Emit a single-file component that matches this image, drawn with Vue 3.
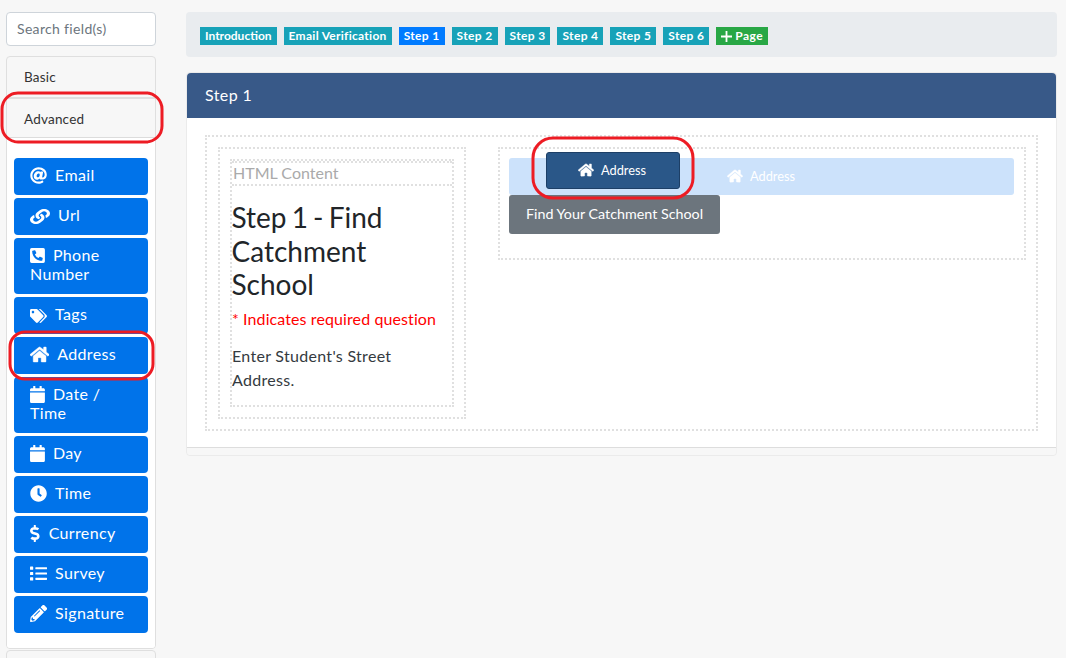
<script setup>
import { ref } from 'vue'

const homeIcon = { w: 576, home: true, d: 'M280.37 148.26L96 300.11V464a16 16 0 0 0 16 16l112.06-.29a16 16 0 0 0 15.92-16V368a16 16 0 0 1 16-16h64a16 16 0 0 1 16 16v95.64a16 16 0 0 0 16 16.05L464 480a16 16 0 0 0 16-16V300L295.67 148.26a12.19 12.19 0 0 0-15.3 0zM571.6 251.47L488 182.56V44.05a12 12 0 0 0-12-12h-56a12 12 0 0 0-12 12v72.61L318.47 43a48 48 0 0 0-61 0L4.34 251.47a12 12 0 0 0-1.6 16.9l25.5 31A12 12 0 0 0 45.15 301l235.22-193.74a12.19 12.19 0 0 1 15.3 0L530.9 301a12 12 0 0 0 16.9-1.6l25.5-31a12 12 0 0 0-1.7-16.93z' }
const calendarIcon = { w: 448, d: 'M12 192h424c6.6 0 12 5.4 12 12v260c0 26.5-21.5 48-48 48H48c-26.5 0-48-21.5-48-48V204c0-6.6 5.4-12 12-12zm436-44v-36c0-26.5-21.5-48-48-48h-48V12c0-6.6-5.4-12-12-12h-40c-6.6 0-12 5.4-12 12v52H160V12c0-6.6-5.4-12-12-12h-40c-6.6 0-12 5.4-12 12v52H48C21.5 64 0 85.5 0 112v36c0 6.6 5.4 12 12 12h424c6.6 0 12-5.4 12-12z' }

// iw / ih: icons that are drawn squatter than their box
const fields = ref([
  { label: 'Email', w: 512, d: 'M256 8C118.941 8 8 118.919 8 256c0 137.059 110.919 248 248 248 48.154 0 95.342-14.14 135.408-40.223 12.005-7.815 14.625-24.288 5.552-35.372l-10.177-12.433c-7.671-9.371-21.179-11.667-31.373-5.129C325.92 429.757 291.314 440 256 440c-101.458 0-184-82.542-184-184S154.542 72 256 72c100.139 0 184 57.619 184 160 0 38.786-21.093 79.742-58.17 83.693-17.349-.454-16.91-12.857-13.476-30.024l23.433-121.11C394.653 149.75 383.308 136 368.225 136h-44.981a13.518 13.518 0 0 0-13.432 11.993l-.01.092c-14.697-17.901-40.448-21.775-59.971-21.775-74.58 0-137.831 62.234-137.831 151.46 0 65.303 36.785 105.87 96 105.87 26.984 0 57.369-15.637 74.991-38.333 9.522 34.104 40.613 34.103 70.71 34.103C462.609 379.41 504 307.798 504 232 504 95.653 394.023 8 256 8zm-21.68 304.43c-22.249 0-36.07-15.623-36.07-40.771 0-44.993 30.779-72.729 58.63-72.729 22.292 0 35.601 15.241 35.601 40.77 0 45.061-33.875 72.73-58.161 72.73z' },
  { label: 'Url', w: 512, iw: 20, ih: 15, d: 'M326.612 185.391c59.747 59.809 58.927 155.698.36 214.59-.11.12-.24.25-.36.37l-67.2 67.2c-59.27 59.27-155.699 59.262-214.96 0-59.27-59.26-59.27-155.7 0-214.96l37.106-37.106c9.84-9.84 26.786-3.3 27.294 10.606.648 17.722 3.826 35.527 9.69 52.721 1.986 5.822.567 12.262-3.783 16.612l-13.087 13.087c-28.026 28.026-28.905 73.66-1.155 101.96 28.024 28.579 74.086 28.749 102.325.51l67.2-67.19c28.191-28.191 28.073-73.757 0-101.83-3.701-3.694-7.429-6.564-10.341-8.569a16.037 16.037 0 0 1-6.947-12.606c-.396-10.567 3.348-21.456 11.698-29.806l21.054-21.055c5.521-5.521 14.182-6.199 20.584-1.731a152.482 152.482 0 0 1 20.522 17.197zM467.547 44.449c-59.261-59.262-155.69-59.27-214.96 0l-67.2 67.2c-.12.12-.25.25-.36.37-58.566 58.892-59.387 154.781.36 214.59a152.454 152.454 0 0 0 20.521 17.196c6.402 4.468 15.064 3.789 20.584-1.731l21.054-21.055c8.35-8.35 12.094-19.239 11.698-29.806a16.037 16.037 0 0 0-6.947-12.606c-2.912-2.005-6.64-4.875-10.341-8.569-28.073-28.073-28.191-73.639 0-101.83l67.2-67.19c28.239-28.239 74.3-28.069 102.325.51 27.75 28.3 26.872 73.934-1.155 101.96l-13.087 13.087c-4.35 4.35-5.769 10.79-3.783 16.612 5.864 17.194 9.042 34.999 9.69 52.721.509 13.906 17.454 20.446 27.294 10.606l37.106-37.106c59.271-59.259 59.271-155.699.001-214.959z' },
  { label: 'Phone Number', w: 448, d: 'M400 32H48A48 48 0 0 0 0 80v352a48 48 0 0 0 48 48h352a48 48 0 0 0 48-48V80a48 48 0 0 0-48-48zm-16.39 307.37l-15 65A15 15 0 0 1 354 416C194 416 64 286.29 64 126a15.7 15.7 0 0 1 11.63-14.61l65-15A18.23 18.23 0 0 1 144 96a16.27 16.27 0 0 1 13.79 9.09l30 70A17.9 17.9 0 0 1 189 181a17 17 0 0 1-5.5 11.61l-37.89 31a231.91 231.91 0 0 0 110.78 110.78l31-37.89A17 17 0 0 1 299 291a17.85 17.85 0 0 1 5.91 1.21l70 30A16.25 16.25 0 0 1 384 336a17.41 17.41 0 0 1-.39 3.37z' },
  { label: 'Tags', w: 640, iw: 17, ih: 14, d: 'M497.941 225.941L286.059 14.059A48 48 0 0 0 252.118 0H48C21.49 0 0 21.49 0 48v204.118a48 48 0 0 0 14.059 33.941l211.882 211.882c18.744 18.745 49.136 18.746 67.882 0l204.118-204.118c18.745-18.745 18.745-49.137 0-67.882zM112 160c-26.51 0-48-21.49-48-48s21.49-48 48-48 48 21.49 48 48-21.49 48-48 48zm513.941 133.823L421.823 497.941c-18.745 18.745-49.137 18.745-67.882 0l-.36-.36L527.64 323.522c16.999-16.999 26.36-39.6 26.36-63.64s-9.362-46.641-26.36-63.64L331.397 0h48.721a48 48 0 0 1 33.941 14.059l211.882 211.882c18.745 18.745 18.745 49.137 0 67.882z' },
  { label: 'Address', ...homeIcon },
  { label: 'Date / Time', ...calendarIcon },
  { label: 'Day', ...calendarIcon },
  { label: 'Time', w: 512, d: 'M256,8C119,8,8,119,8,256S119,504,256,504,504,393,504,256,393,8,256,8Zm92.49,313h0l-20,25a16,16,0,0,1-22.49,2.5h0l-67-49.72a40,40,0,0,1-15-31.23V112a16,16,0,0,1,16-16h32a16,16,0,0,1,16,16V256l58,42.5A16,16,0,0,1,348.49,321Z' },
  { label: 'Currency', w: 320, d: 'M209.2 233.4l-108-31.6C88.7 198.2 80 186.5 80 173.5c0-16.3 13.2-29.5 29.5-29.5h66.3c12.2 0 24.2 3.7 34.2 10.5 6.1 4.1 14.3 3.1 19.5-2l34.8-34c7.1-6.9 6.1-18.4-1.8-24.5C238 74.8 207.4 64.1 176 64V16c0-8.8-7.2-16-16-16h-32c-8.8 0-16 7.2-16 16v48h-2.5C45.8 64-5.4 118.7.5 183.6c4.2 46.1 39.4 83.6 83.8 96.6l102.5 30c12.5 3.7 21.2 15.3 21.2 28.3 0 16.3-13.2 29.5-29.5 29.5h-66.3C100 368 88 364.3 78 357.5c-6.1-4.1-14.3-3.1-19.5 2l-34.8 34c-7.1 6.9-6.1 18.4 1.8 24.5 24.5 19.2 55.1 29.9 86.5 30v48c0 8.8 7.2 16 16 16h32c8.8 0 16-7.2 16-16v-48.2c46.6-.9 90.3-28.6 105.7-72.7 21.5-61.6-14.6-124.8-72.5-141.7z' },
  { label: 'Survey', w: 512, d: 'M80 368H16a16 16 0 0 0-16 16v64a16 16 0 0 0 16 16h64a16 16 0 0 0 16-16v-64a16 16 0 0 0-16-16zm0-320H16A16 16 0 0 0 0 64v64a16 16 0 0 0 16 16h64a16 16 0 0 0 16-16V64a16 16 0 0 0-16-16zm0 160H16a16 16 0 0 0-16 16v64a16 16 0 0 0 16 16h64a16 16 0 0 0 16-16v-64a16 16 0 0 0-16-16zm416 176H176a16 16 0 0 0-16 16v32a16 16 0 0 0 16 16h320a16 16 0 0 0 16-16v-32a16 16 0 0 0-16-16zm0-320H176a16 16 0 0 0-16 16v32a16 16 0 0 0 16 16h320a16 16 0 0 0 16-16V80a16 16 0 0 0-16-16zm0 160H176a16 16 0 0 0-16 16v32a16 16 0 0 0 16 16h320a16 16 0 0 0 16-16v-32a16 16 0 0 0-16-16z' },
  { label: 'Signature', w: 512, d: 'M497.9 142.1l-46.1 46.1c-4.7 4.7-12.3 4.7-17 0l-111-111c-4.7-4.7-4.7-12.3 0-17l46.1-46.1c18.7-18.7 49.1-18.7 67.9 0l60.1 60.1c18.8 18.7 18.8 49.1 0 67.9zM284.2 99.8L21.6 362.4.4 483.9c-2.9 16.4 11.4 30.6 27.8 27.8l121.5-21.3 262.6-262.6c4.7-4.7 4.7-12.3 0-17l-111-111c-4.8-4.7-12.4-4.7-17.1 0zM124.1 339.9c-5.5-5.5-5.5-14.3 0-19.8l154-154c5.5-5.5 14.3-5.5 19.8 0s5.5 14.3 0 19.8l-154 154c-5.5 5.5-14.3 5.5-19.8 0zM88 424h48v36.3l-64.5 11.3-31.1-31.1L51.7 376H88v48z' }
])

const pages = ref(['Introduction', 'Email Verification', 'Step 1', 'Step 2', 'Step 3', 'Step 4', 'Step 5', 'Step 6'])

function iconSize(f) {
  return {
    width: (f.iw || f.w / 30) + 'px',
    height: (f.ih || 17) + 'px'
  }
}
</script>

<template>
  <div class="page">
    <aside class="sidebar">
      <input class="search" type="text" placeholder="Search field(s)" />
      <div class="accordion">
        <div class="acc-head basic">Basic</div>
        <div class="acc-head advanced">Advanced</div>
        <div class="acc-body">
          <button v-for="f in fields" :key="f.label" class="field-btn">
            <svg class="ico" :class="{ home: f.home }" :viewBox="`0 0 ${f.w} 512`" :style="iconSize(f)" :preserveAspectRatio="f.iw ? 'none' : undefined"><path :d="f.d" /></svg>{{ f.label }}
          </button>
        </div>
      </div>
      <div class="accordion next"></div>
    </aside>

    <main class="main">
      <div class="toolbar">
        <span
          v-for="p in pages"
          :key="p"
          class="badge"
          :class="{ active: p === 'Step 1', step: p.startsWith('Step'), wide: p.startsWith('Email') }"
        >{{ p }}</span>
        <span class="badge add">
          <svg class="plus" viewBox="0 0 11 11"><path d="M5.5 0v11M0 5.5h11" /></svg>Page
        </span>
      </div>

      <div class="card-wrap">
        <div class="card">
          <div class="card-head">Step 1</div>
          <div class="card-body">
            <div class="row-box">
              <div class="col-box left">
                <div class="html-box">
                  <div class="html-label">HTML Content</div>
                  <div class="html-inner">
                    <h2>Step 1 - Find Catchment School</h2>
                    <p class="req">* Indicates required question</p>
                    <p class="intro">Enter Student's Street Address.</p>
                  </div>
                </div>
              </div>
              <div class="col-box right">
                <div class="ghost">
                  <svg class="ico small home" viewBox="0 0 576 512"><path :d="fields[4].d" /></svg>Address
                </div>
                <button class="gray-btn">Find Your Catchment School</button>
                <div class="dragging">
                  <svg class="ico small home" viewBox="0 0 576 512"><path :d="fields[4].d" /></svg>Address
                </div>
              </div>
            </div>
          </div>
          <div class="card-foot"></div>
        </div>
      </div>
    </main>

    <!-- red annotations drawn over the screenshot -->
    <svg class="marks" width="1066" height="658" viewBox="0 0 1066 658">
      <rect x="2" y="93" width="160" height="49" rx="16" />
      <rect x="10" y="332" width="143" height="47" rx="15" />
      <rect x="533" y="138" width="160" height="60" rx="20" />
    </svg>
  </div>
</template>

<style>
html, body {
  margin: 0;
  overflow: hidden;
  background: #f7f7f7;
}
</style>

<style scoped>
.page {
  position: relative;
  width: 1066px;
  height: 658px;
  overflow: hidden;
  display: flex;
  align-items: flex-start;
  padding: 12px 0 0 6px;
  box-sizing: border-box;
  background: #f7f7f7;
  font-family: Lato, "Open Sans", sans-serif;
  font-size: 16px;
  color: #212529;
}
.sidebar {
  width: 150px;
  flex: none;
}
.search {
  display: block;
  width: 100%;
  height: 34px;
  box-sizing: border-box;
  padding: 0 10px 2px;
  border: 1px solid #ced4da;
  border-radius: 4px;
  font: 14px Lato, sans-serif;
  letter-spacing: 0.33px;
  background: #fff;
  margin-bottom: 10px;
}
.search::placeholder {
  color: #6c757d;
  opacity: 1;
}
.accordion {
  border: 1px solid #dfdfdf;
  border-radius: 4px;
  background: #f7f7f7;
  overflow: hidden;
}
.acc-head {
  padding: 0 17px;
  font-size: 13.5px;
  letter-spacing: 0.2px;
  color: #333;
  display: flex;
  align-items: center;
}
.basic {
  height: 40px;
}
.advanced {
  height: 41px;
  padding-top: 1px;
  border-top: 2px solid #e0e0e0;
  border-bottom: 1px solid #dcdcdc;
  box-sizing: border-box;
}
.acc-body {
  background: #fff;
  padding: 20px 7px 15px;
  display: flex;
  flex-direction: column;
  gap: 3px;
}
.field-btn {
  display: block;
  width: 134px;
  box-sizing: border-box;
  padding: 7px 16px 11px;
  border: none;
  border-radius: 4px;
  background: #0073ea;
  color: #fff;
  font: 16px/19px Lato, sans-serif;
  letter-spacing: 0.35px;
  text-align: left;
}
.next {
  margin-top: 1px;
  height: 30px;
}
.ico {
  fill: currentColor;
  vertical-align: -2.5px;
  margin-right: 8px;
}
.ico.home path {
  stroke: currentColor;
  stroke-width: 14;
}
.ico.small {
  width: 16px;
  height: 14px;
  margin-right: 7px;
}
.main {
  margin-left: 30px;
  width: 871px;
  flex: none;
}
.toolbar {
  height: 45px;
  box-sizing: border-box;
  padding: 15px 14px;
  background: #e9ecef;
  border-radius: 4px;
  display: flex;
  gap: 7px;
  margin-bottom: 15px;
}
.badge {
  height: 18px;
  box-sizing: border-box;
  padding: 0 5px;
  background: #17a2b8;
  color: #fff;
  font-size: 12px;
  font-weight: 700;
  line-height: 18px;
  white-space: nowrap;
}
.badge.step {
  letter-spacing: 0.35px;
}
.badge.wide {
  letter-spacing: 0.28px;
}
.badge.active {
  background: #007bff;
}
.badge.add {
  background: #28a745;
  display: inline-flex;
  align-items: center;
  letter-spacing: 0.5px;
}
.plus {
  width: 11px;
  height: 11px;
  margin-right: 3px;
  stroke: #fff;
  stroke-width: 1.8;
  fill: none;
}
.card-wrap {
  border: 1px solid #ebebeb;
  border-radius: 4px;
}
.card {
  border-radius: 4px;
  overflow: hidden;
}
.card-head {
  height: 45px;
  box-sizing: border-box;
  padding: 0 18px;
  background: #385988;
  color: #fff;
  font-size: 16px;
  letter-spacing: 0.4px;
  line-height: 44px;
}
.card-body {
  background: #fff;
  padding: 17px 18px 16px;
  border-bottom: 1px solid #ddd;
}
.card-foot {
  height: 7px;
  background: #f7f7f7;
}
.row-box {
  border: 2px dotted #e0e0e0;
  padding: 10px 10px 10px 11px;
  display: grid;
  grid-template-columns: 248px 528px;
  column-gap: 32px;
  align-items: start;
}
.col-box {
  border: 2px dotted #e0e0e0;
  box-sizing: border-box;
}
.left {
  height: 272px;
  padding: 10px;
}
.right {
  position: relative;
  height: 113px;
  padding: 9px 10px 9px 9px;
}
.html-box {
  border: 2px dotted #e0e0e0;
  height: 248px;
  box-sizing: border-box;
}
.html-label {
  height: 25px;
  box-sizing: border-box;
  border-top: 2px dotted #e0e0e0;
  border-bottom: 2px dotted #e0e0e0;
  color: #aaa;
  padding-left: 1px;
  line-height: 19px;
}
.html-inner {
  padding: 15px 0 0;
}
h2 {
  margin: 0 0 5px -0.5px;
  font-size: 28px;
  font-weight: 400;
  line-height: 33.6px;
  word-spacing: -2px;
}
.req {
  margin: 0 0 13px;
  color: #f00;
  letter-spacing: 0.1px;
  line-height: 24px;
}
.intro {
  margin: 0;
  color: #343a40;
  letter-spacing: 0.3px;
  line-height: 24px;
}
.ghost {
  height: 37px;
  padding: 0 1px 2px 0;
  box-sizing: border-box;
  background: #cce2fb;
  border-radius: 3px;
  color: #fff;
  font-size: 12.8px;
  display: flex;
  align-items: center;
  justify-content: center;
}
.gray-btn {
  display: block;
  width: 211px;
  height: 39px;
  padding: 0 0 2px;
  border: none;
  border-radius: 3px;
  background: #6c757d;
  color: #fff;
  font: 14.3px Lato, sans-serif;
}
.dragging {
  position: absolute;
  left: 46px;
  top: 3px;
  width: 134px;
  height: 37px;
  padding: 0 2px 2px 0;
  box-sizing: border-box;
  border: 1px solid #1d3f66;
  border-radius: 3px;
  background: #2a5788;
  color: #fff;
  font-size: 12.8px;
  display: flex;
  align-items: center;
  justify-content: center;
}
.marks {
  position: absolute;
  left: 0;
  top: 0;
  pointer-events: none;
}
.marks rect {
  fill: none;
  stroke: #ed1c24;
  stroke-width: 3;
}
</style>
